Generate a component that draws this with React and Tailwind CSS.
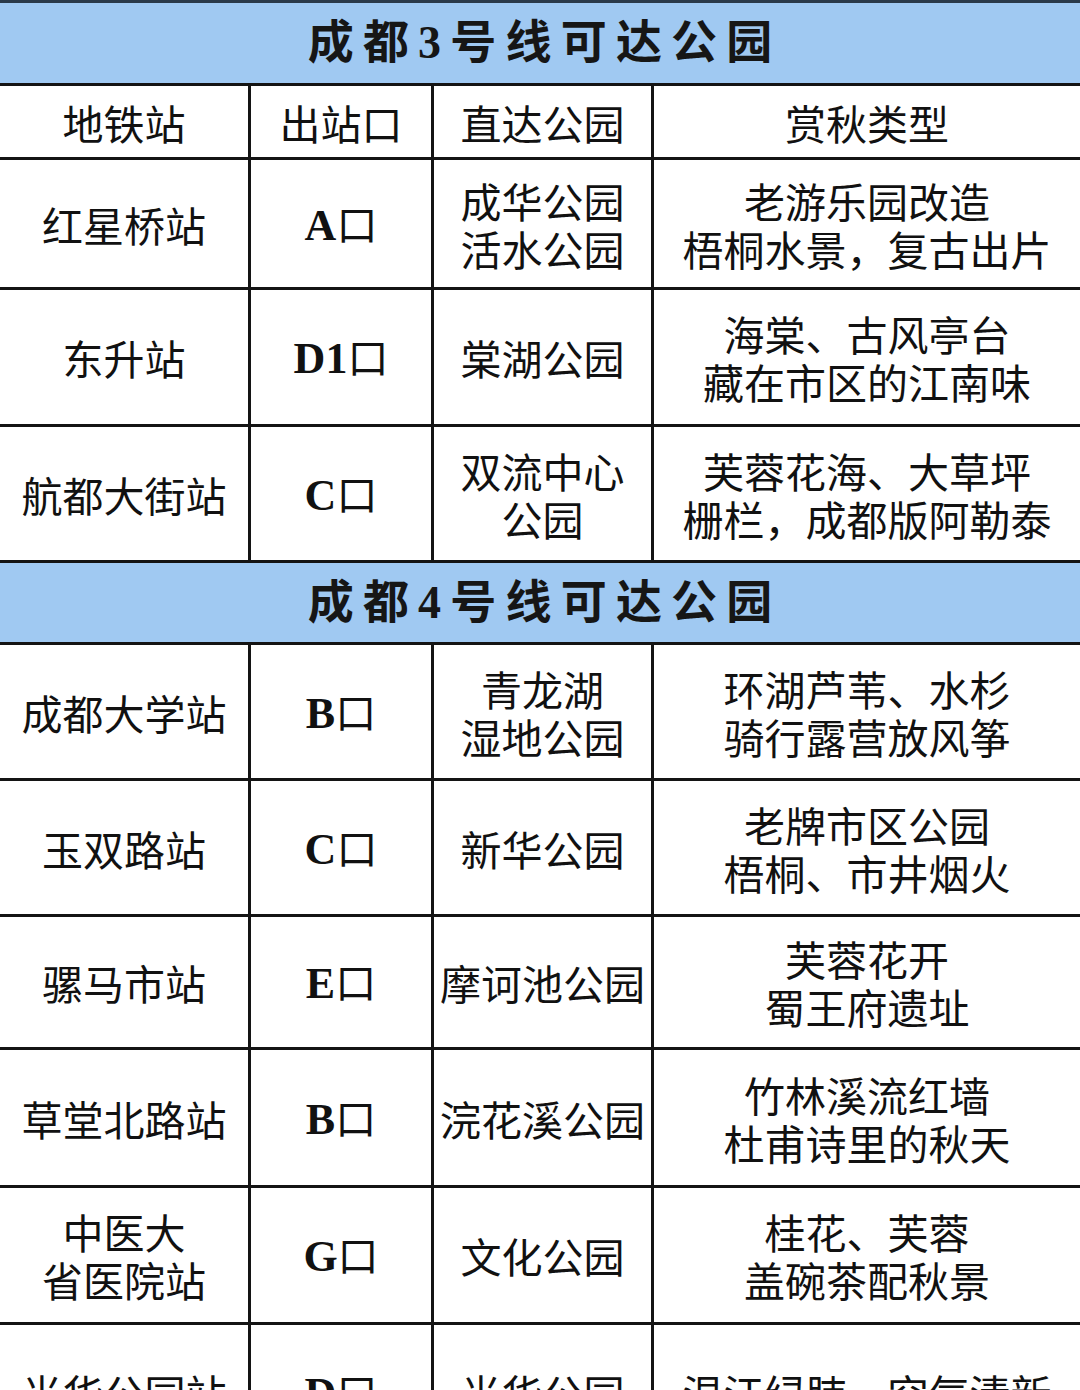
const rows3 = [
  { h: "h-[130px]", station: "红星桥站", exit: "A", park: ["成华公园", "活水公园"], type: ["老游乐园改造", "梧桐水景，复古出片"] },
  { h: "h-[137px]", station: "东升站", exit: "D1", park: ["棠湖公园"], type: ["海棠、古风亭台", "藏在市区的江南味"] },
  { h: "h-[136px]", station: "航都大街站", exit: "C", park: ["双流中心", "公园"], type: ["芙蓉花海、大草坪", "栅栏，成都版阿勒泰"] },
];

const rows4 = [
  { h: "h-[136px]", station: "成都大学站", exit: "B", park: ["青龙湖", "湿地公园"], type: ["环湖芦苇、水杉", "骑行露营放风筝"] },
  { h: "h-[136px]", station: "玉双路站", exit: "C", park: ["新华公园"], type: ["老牌市区公园", "梧桐、市井烟火"] },
  { h: "h-[133px]", station: "骡马市站", exit: "E", park: ["摩诃池公园"], type: ["芙蓉花开", "蜀王府遗址"] },
  { h: "h-[138px]", station: "草堂北路站", exit: "B", park: ["浣花溪公园"], type: ["竹林溪流红墙", "杜甫诗里的秋天"] },
  { h: "h-[137px]", station: ["中医大", "省医院站"], exit: "G", park: ["文化公园"], type: ["桂花、芙蓉", "盖碗茶配秋景"] },
  { h: "h-[136px]", station: "光华公园站", exit: "D", park: ["光华公园"], type: ["温江绿肺，空气清新"] },
];

const cell = "flex flex-col items-center justify-center text-center overflow-hidden";
const line = "border-l-[3px] border-[#141414]";

function Lines({ items }) {
  const list = Array.isArray(items) ? items : [items];
  return list.map((t, i) => (
    <span key={i} className="block whitespace-nowrap h-[48px]">
      {t}
    </span>
  ));
}

function Row({ r }) {
  return (
    <div className={`grid grid-cols-[248px_183px_220px_1fr] border-b-[3px] border-[#141414] ${r.h}`}>
      <div className={cell}>
        <Lines items={r.station} />
      </div>
      <div className={`${cell} ${line}`}>
        <span className="whitespace-nowrap">
          <span className="font-['Liberation_Serif'] font-bold text-[44px]">{r.exit}</span>口
        </span>
      </div>
      <div className={`${cell} ${line}`}>
        <Lines items={r.park} />
      </div>
      <div className={`${cell} ${line}`}>
        <Lines items={r.type} />
      </div>
    </div>
  );
}

function Band({ text, h }) {
  return (
    <div className={`flex items-center justify-center bg-[#a0c9f2] border-b-[3px] border-[#141414] ${h}`}>
      <span className="font-['Liberation_Serif','Noto_Sans_CJK_SC',serif] font-semibold text-[46px] tracking-[0.2em] ml-[0.2em] text-[#161616] leading-none">
        {text}
      </span>
    </div>
  );
}

export default function App() {
  return (
    <div className="w-[1080px] h-[1390px] overflow-hidden bg-white text-[#111] font-['Noto_Sans_CJK_SC',sans-serif] text-[41px] leading-[48px] border-t-[3px] border-[#2a3a4a]">
      <Band text="成都3号线可达公园" h="h-[83px]" />
      <div className="grid grid-cols-[248px_183px_220px_1fr] border-b-[3px] border-[#141414] h-[74px]">
        <div className={cell}>地铁站</div>
        <div className={`${cell} ${line}`}>出站口</div>
        <div className={`${cell} ${line}`}>直达公园</div>
        <div className={`${cell} ${line}`}>赏秋类型</div>
      </div>
      {rows3.map((r, i) => (
        <Row key={i} r={r} />
      ))}
      <Band text="成都4号线可达公园" h="h-[82px]" />
      {rows4.map((r, i) => (
        <Row key={i} r={r} />
      ))}
    </div>
  );
}
